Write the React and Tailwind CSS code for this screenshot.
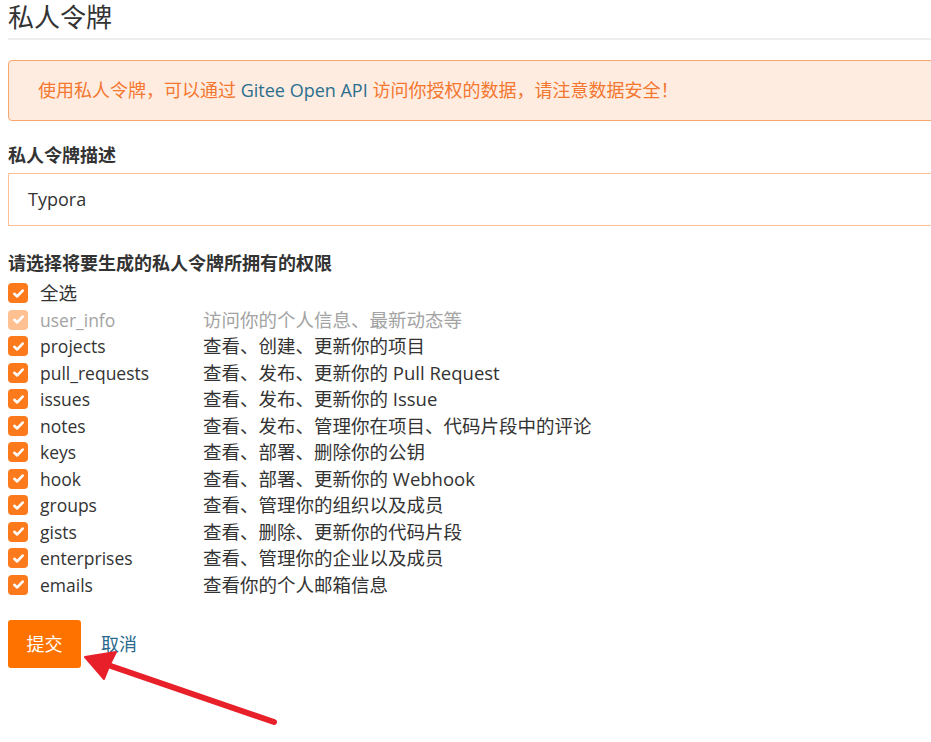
import React from "react";

const rows = [
  ["user_info", "访问你的个人信息、最新动态等", true],
  ["projects", "查看、创建、更新你的项目"],
  ["pull_requests", "查看、发布、更新你的 Pull Request"],
  ["issues", "查看、发布、更新你的 Issue"],
  ["notes", "查看、发布、管理你在项目、代码片段中的评论"],
  ["keys", "查看、部署、删除你的公钥"],
  ["hook", "查看、部署、更新你的 Webhook"],
  ["groups", "查看、管理你的组织以及成员"],
  ["gists", "查看、删除、更新你的代码片段"],
  ["enterprises", "查看、管理你的企业以及成员"],
  ["emails", "查看你的个人邮箱信息"],
];

function Box({ light }) {
  return (
    <span
      className={
        "flex h-[20px] w-[20px] items-center justify-center rounded-[4px] " +
        (light ? "bg-[#ffc191]" : "bg-[#fd7a1c]")
      }
    >
      <svg width="13" height="13" viewBox="0 0 14 14">
        <path d="M2.5 7.3 L5.6 10.2 L11.5 3.8" fill="none" stroke="#fff" strokeWidth="2.8" strokeLinecap="round" strokeLinejoin="round" />
      </svg>
    </span>
  );
}

export default function App() {
  return (
    <div
      className="relative h-[742px] w-[931px] overflow-hidden bg-white text-[#333]"
      style={{ fontFamily: '"Open Sans", "Noto Sans CJK SC", sans-serif' }}
    >
      <div className="w-[1000px] pl-2">
        <h1 className="border-b-2 border-[#eeeeee] pb-[4px] text-[26px] leading-[34px] font-normal text-[#333]">私人令牌</h1>
        <div className="mt-[20px] flex h-[61px] items-center rounded-[4px] border border-[#f9a56e] bg-[#ffece0] pl-[29px] text-[18px] text-[#f3772f]">
          使用私人令牌，可以通过&nbsp;<span className="text-[#2b6f8f]">Gitee Open API</span>&nbsp;访问你授权的数据，请注意数据安全！
        </div>
        <div className="mt-[22px] text-[18px] leading-[24px] font-bold">私人令牌描述</div>
        <div className="mt-[6px] flex h-[53px] items-center border border-[#fcc097] pl-[19px] text-[18px] text-[#333]">Typora</div>
        <div className="mt-[25px] text-[18px] leading-[24px] font-bold">请选择将要生成的私人令牌所拥有的权限</div>
        <div className="mt-[5px] flex flex-col text-[18px] leading-[26.5px]">
          <div className="flex h-[26.5px] items-center">
            <Box />
            <span className="ml-[12px] text-[18.5px]">全选</span>
          </div>
          {rows.map(([k, d, light]) => (
            <div key={k} className={"flex h-[26.5px] items-center " + (light ? "text-[#a3a3a3]" : "")}>
              <Box light={light} />
              <span className="ml-[12px] w-[163px] text-[17.5px]">{k}</span>
              <span className="text-[18.5px]">{d}</span>
            </div>
          ))}
        </div>
        <div className="mt-[22px] flex items-center">
          <button className="flex h-[48px] w-[73px] items-center justify-center rounded-[3px] bg-[#fe7300] text-[18px] text-white">提交</button>
          <span className="ml-[20px] text-[18px] text-[#2a6a8e]">取消</span>
        </div>
      </div>
      <svg className="absolute left-0 top-0" width="931" height="742" viewBox="0 0 931 742">
        <line x1="274" y1="722" x2="105" y2="664" stroke="#e8202a" strokeWidth="6" strokeLinecap="round" />
        <polygon points="85,657 116,652 110,664 104,679" fill="#e8202a" stroke="#e8202a" strokeWidth="2" strokeLinejoin="round" />
      </svg>
    </div>
  );
}
